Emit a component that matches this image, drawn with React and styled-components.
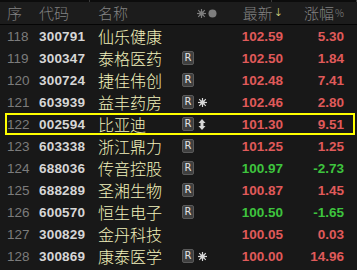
import React from "react";
import styled, { createGlobalStyle } from "styled-components";

const Global = createGlobalStyle`
  html, body { margin: 0; padding: 0; background: #181818; }
  body { width: 357px; height: 270px; overflow: hidden; }
`;

const Table = styled.div`
  width: 357px;
  height: 270px;
  background: #181818;
  overflow: hidden;
  font-family: "Liberation Sans", Arial, sans-serif;
`;

const TopStrip = styled.div`
  height: 2px;
  background: #0c0c0c;
  display: grid;
  grid-template-columns: 90px 182px 1fr;
  & > span { border-right: 1px solid #3a3a3a; }
`;

const cols = "32px 59px 84px 16px 12px 73px 61px 1fr";

const HeaderRow = styled.div`
  display: grid;
  grid-template-columns: ${cols};
  align-items: center;
  height: 22px;
  padding-left: 7px;
  background: #1c1c1c;
  border-bottom: 1px solid #050505;
  color: #838383;
  font-family: "Noto Sans CJK SC", sans-serif;
  font-size: 15px;
  font-weight: 300;
  line-height: 22px;
`;

const HeadCell = styled.div`
  white-space: nowrap;
  display: flex;
  align-items: center;
  gap: ${(p) => p.$gap || 0}px;
  padding-left: ${(p) => p.$pad || 0}px;
  justify-content: ${(p) => (p.$right ? "flex-end" : "flex-start")};
  grid-column: ${(p) => p.$span || "auto"};
  min-width: 0;
  & > svg { flex-shrink: 0; }
`;

const SortArrow = styled.span`
  color: #e8e890;
  font-family: "DejaVu Sans", sans-serif;
  font-size: 11px;
  margin-left: 1px;
`;

const Pct = styled.span`
  font-size: 10px;
  margin-left: 1px;
`;

const Row = styled.div`
  position: relative;
  display: grid;
  grid-template-columns: ${cols};
  align-items: center;
  height: 22px;
  padding-left: 7px;
  ${(p) =>
    p.$active &&
    `
    &::after {
      content: "";
      position: absolute;
      left: 5px;
      right: 2px;
      top: 0;
      bottom: 0;
      border: 2px solid #ffff00;
      pointer-events: none;
    }
  `}
`;

const Index = styled.div`
  color: #7c7c7c;
  font-size: 13.5px;
`;

const Code = styled.div`
  color: #d6d6d6;
  font-weight: bold;
  font-size: 13.5px;
  letter-spacing: 0.2px;
`;

const Name = styled.div`
  color: #f2f2bc;
  font-family: "Noto Sans CJK SC", sans-serif;
  font-size: 16px;
  font-weight: 300;
  line-height: 22px;
  white-space: nowrap;
`;

const Badge = styled.span`
  display: inline-flex;
  align-items: center;
  justify-content: center;
  width: 12px;
  height: 14px;
  border-radius: 2px;
  background: #3f3f3f;
  border: 1px solid #5a5a5a;
  box-sizing: border-box;
  color: #e4e4e4;
  font-size: 10px;
  font-family: "DejaVu Sans", sans-serif;
  line-height: 1;
`;

const Num = styled.div`
  text-align: right;
  font-weight: bold;
  font-size: 13.5px;
  color: ${(p) => (p.$down ? "#3ec43e" : "#e05a5a")};
`;

const IconWrap = styled.div`
  display: flex;
  align-items: center;
  & > svg { flex-shrink: 0; }
`;

const Sun = ({ color = "#d8d8d8", size = 9 }) => (
  <svg width={size} height={size} viewBox="0 0 10 10">
    <g stroke={color} strokeWidth="1.3" strokeLinecap="square">
      <line x1="5" y1="0.5" x2="5" y2="9.5" />
      <line x1="0.5" y1="5" x2="9.5" y2="5" />
      <line x1="1.8" y1="1.8" x2="8.2" y2="8.2" />
      <line x1="8.2" y1="1.8" x2="1.8" y2="8.2" />
    </g>
    <circle cx="5" cy="5" r="2.6" fill={color} />
  </svg>
);

const UpDown = () => (
  <svg width="8" height="11" viewBox="0 0 8 11">
    <polygon points="4,0 7.5,4 5.5,4 5.5,7 7.5,7 4,11 0.5,7 2.5,7 2.5,4 0.5,4" fill="#d8d8d8" />
  </svg>
);

const Dot = () => (
  <svg width="9" height="9" viewBox="0 0 9 9">
    <circle cx="4.5" cy="4.5" r="4" fill="#7e7e7e" />
  </svg>
);

const rows = [
  ["118", "300791", "仙乐健康", false, null, "102.59", "5.30"],
  ["119", "300347", "泰格医药", true, null, "102.50", "1.84"],
  ["120", "300724", "捷佳伟创", true, null, "102.48", "7.41"],
  ["121", "603939", "益丰药房", true, "sun", "102.46", "2.80"],
  ["122", "002594", "比亚迪", true, "updown", "101.30", "9.51"],
  ["123", "603338", "浙江鼎力", true, null, "101.25", "1.25"],
  ["124", "688036", "传音控股", true, null, "100.97", "-2.73"],
  ["125", "688289", "圣湘生物", true, null, "100.87", "1.45"],
  ["126", "600570", "恒生电子", true, null, "100.50", "-1.65"],
  ["127", "300829", "金丹科技", false, null, "100.05", "0.03"],
  ["128", "300869", "康泰医学", true, "sun", "100.00", "14.96"],
];

export default function App() {
  return (
    <>
      <Global />
      <Table>
        <TopStrip>
          <span />
          <span />
          <span />
        </TopStrip>
        <HeaderRow>
          <HeadCell>序</HeadCell>
          <HeadCell>代码</HeadCell>
          <HeadCell>名称</HeadCell>
          <HeadCell $span="span 2" $pad={15} $gap={2}>
            <Sun color="#7e7e7e" size={9} />
            <Dot />
          </HeadCell>
          <HeadCell $right>
            最新<SortArrow>↓</SortArrow>
          </HeadCell>
          <HeadCell $right>
            涨幅<Pct>%</Pct>
          </HeadCell>
        </HeaderRow>
        {rows.map(([idx, code, name, r, icon, price, chg]) => {
          const down = chg.startsWith("-");
          return (
            <Row key={idx} $active={code === "002594"}>
              <Index>{idx}</Index>
              <Code>{code}</Code>
              <Name>{name}</Name>
              <IconWrap>{r && <Badge>R</Badge>}</IconWrap>
              <IconWrap>
                {icon === "sun" && <Sun />}
                {icon === "updown" && <UpDown />}
              </IconWrap>
              <Num $down={down}>{price}</Num>
              <Num $down={down}>{chg}</Num>
            </Row>
          );
        })}
      </Table>
    </>
  );
}
